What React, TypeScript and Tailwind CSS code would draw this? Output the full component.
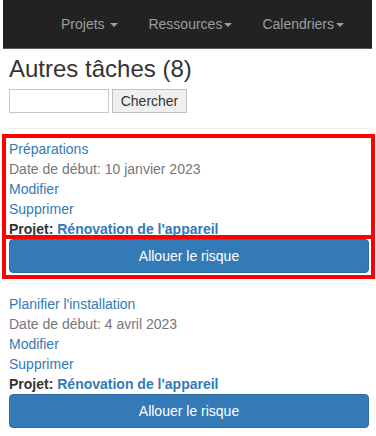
import React from 'react';

type Task = { id: number; name: string; start: string; project: string };

const tasks: Task[] = [
    { id: 1, name: 'Préparations', start: '10 janvier 2023', project: "Rénovation de l'appareil" },
    { id: 2, name: "Planifier l'installation", start: '4 avril 2023', project: "Rénovation de l'appareil" },
];

const menus = [
    { label: 'Projets', spaced: true },
    { label: 'Ressources', spaced: false },
    { label: 'Calendriers', spaced: false },
];

const Caret: React.FC = () => (
    <span className="inline-block w-0 h-0 ml-[2px] align-middle border-t-[4px] border-x-[4px] border-t-[#9d9d9d] border-x-transparent" />
);

const App: React.FC = () => {
    return (
        <div className="relative min-h-[436px] bg-white text-[14px] leading-[20px] text-[#333] font-['Liberation_Sans',Arial,sans-serif]">
            <nav className="ml-[3px] mr-[4px] h-[49px] bg-[#222] border-b border-[#5a5a5a]">
                <ul className="flex pl-[43px]">
                    {menus.map((m) => (
                        <li key={m.label}>
                            <a className="block px-[15px] pt-[14px] text-[#9d9d9d] whitespace-pre">
                                {m.label}{m.spaced ? ' ' : ''}<Caret />
                            </a>
                        </li>
                    ))}
                </ul>
            </nav>

            <div className="pl-[9px] pr-[7px]">
                <h1 className="mt-[7px] text-[24px] leading-[26px]">Autres tâches (8)</h1>
                <form className="flex items-center gap-[3px] mt-[7px] mb-[15px]" onSubmit={(e) => e.preventDefault()}>
                    <input type="text" className="h-[24px] w-[100px] border border-[#c6c6c6] bg-white px-1 text-[13px]" />
                    <button type="submit" className="h-[24px] w-[75px] border border-[#c0c0c0] bg-[#efefef] text-[#333] text-[14px]">
                        Chercher
                    </button>
                </form>

                {tasks.map((task) => (
                    <div key={task.id}>
                        <hr className="my-[10px] border-t border-[#eee]" />
                        <div>
                            <div><a className="text-[#337ab7]">{task.name}</a></div>
                            <div className="text-[#777]">Date de début: {task.start}</div>
                            <div><a className="text-[#337ab7]">Modifier</a></div>
                            <div><a className="text-[#337ab7]">Supprimer</a></div>
                            <div>
                                <b>Projet:</b> <a className="font-bold text-[#337ab7]">{task.project}</a>
                            </div>
                        </div>
                        <button className="w-full h-[34px] rounded-[4px] border border-[#2e6da4] bg-[#337ab7] text-white text-[14px]">
                            Allouer le risque
                        </button>
                    </div>
                ))}
            </div>

            {/* annotation boxes drawn over the first task */}
            <div className="absolute left-[2px] top-[134px] w-[373px] h-[105px] border-4 border-[#ff0000] pointer-events-none" />
            <div className="absolute left-[2px] top-[235px] w-[373px] h-[44px] border-4 border-[#ff0000] pointer-events-none" />
        </div>
    );
};

export default App;
